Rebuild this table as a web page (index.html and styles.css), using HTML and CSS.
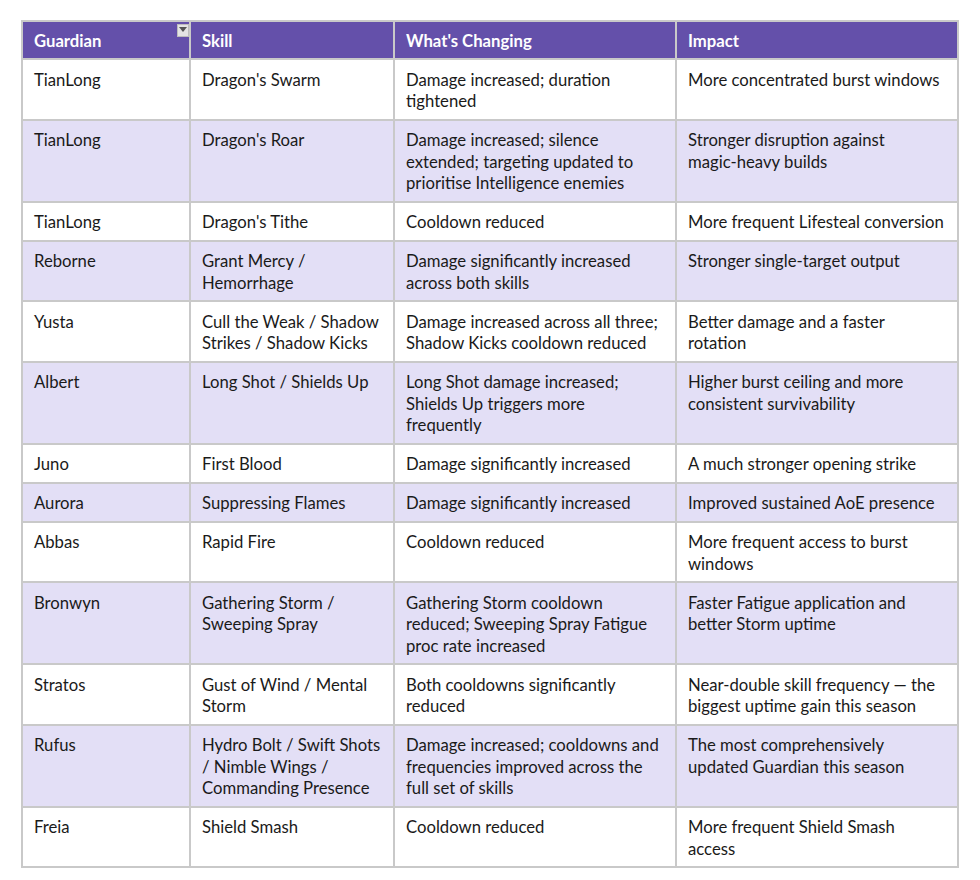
FILE: index.html
```html
<!DOCTYPE html>
<html lang="en">
<head>
<meta charset="utf-8">
<title>Season 6 Guardian changes</title>
<link rel="stylesheet" href="styles.css">
</head>
<body>
<div class="page">
  <table class="changes">
    <colgroup>
      <col class="c-guardian">
      <col class="c-skill">
      <col class="c-change">
      <col class="c-impact">
    </colgroup>
    <thead>
      <tr>
        <th class="has-filter">Guardian<span class="filter" aria-hidden="true"><svg width="8" height="5" viewBox="0 0 8 5"><path d="M0 0h8L4 5z" fill="#555"/></svg></span></th>
        <th>Skill</th>
        <th>What's Changing</th>
        <th>Impact</th>
      </tr>
    </thead>
    <tbody>
      <tr><td>TianLong</td><td>Dragon's Swarm</td><td>Damage increased; duration<br>tightened</td><td>More concentrated burst windows</td></tr>
      <tr><td>TianLong</td><td>Dragon's Roar</td><td>Damage increased; silence<br>extended; targeting updated to<br>prioritise Intelligence enemies</td><td>Stronger disruption against<br>magic-heavy builds</td></tr>
      <tr><td>TianLong</td><td>Dragon's Tithe</td><td>Cooldown reduced</td><td>More frequent Lifesteal conversion</td></tr>
      <tr><td>Reborne</td><td>Grant Mercy /<br>Hemorrhage</td><td>Damage significantly increased<br>across both skills</td><td>Stronger single-target output</td></tr>
      <tr><td>Yusta</td><td>Cull the Weak / Shadow<br>Strikes / Shadow Kicks</td><td>Damage increased across all three;<br>Shadow Kicks cooldown reduced</td><td>Better damage and a faster<br>rotation</td></tr>
      <tr><td>Albert</td><td>Long Shot / Shields Up</td><td>Long Shot damage increased;<br>Shields Up triggers more<br>frequently</td><td>Higher burst ceiling and more<br>consistent survivability</td></tr>
      <tr><td>Juno</td><td>First Blood</td><td>Damage significantly increased</td><td>A much stronger opening strike</td></tr>
      <tr><td>Aurora</td><td>Suppressing Flames</td><td>Damage significantly increased</td><td>Improved sustained AoE presence</td></tr>
      <tr><td>Abbas</td><td>Rapid Fire</td><td>Cooldown reduced</td><td>More frequent access to burst<br>windows</td></tr>
      <tr><td>Bronwyn</td><td>Gathering Storm /<br>Sweeping Spray</td><td>Gathering Storm cooldown<br>reduced; Sweeping Spray Fatigue<br>proc rate increased</td><td>Faster Fatigue application and<br>better Storm uptime</td></tr>
      <tr><td>Stratos</td><td>Gust of Wind / Mental<br>Storm</td><td>Both cooldowns significantly<br>reduced</td><td>Near-double skill frequency — the<br>biggest uptime gain this season</td></tr>
      <tr><td>Rufus</td><td>Hydro Bolt / Swift Shots<br>/ Nimble Wings /<br>Commanding Presence</td><td>Damage increased; cooldowns and<br>frequencies improved across the<br>full set of skills</td><td>The most comprehensively<br>updated Guardian this season</td></tr>
      <tr><td>Freia</td><td>Shield Smash</td><td>Cooldown reduced</td><td>More frequent Shield Smash<br>access</td></tr>
    </tbody>
  </table>
  <p class="caption">Table: Season 6 balance changes by skill, what's changing and the impact on each Guardian</p>
</div>
</body>
</html>
```

FILE: styles.css
```css
html, body {
  margin: 0;
  padding: 0;
  background: #ffffff;
}

.page {
  padding: 20px 0 0 21px;
  font-family: "Lato", "Liberation Sans", sans-serif;
  color: #1a1a1a;
}

.changes {
  border-collapse: collapse;
  table-layout: fixed;
  width: 938px;
  font-size: 16.7px;
  line-height: 21.5px;
}

.c-guardian { width: 168px; }
.c-skill { width: 204px; }
.c-change { width: 282px; }
.c-impact { width: 282px; }

.changes th,
.changes td {
  border: 2px solid #c9c9c9;
  padding: 9.5px 11px 6px 11px;
  text-align: left;
  vertical-align: top;
  white-space: nowrap;
}

.changes th {
  background: #6450aa;
  color: #ffffff;
  font-weight: 700;
  padding-top: 8.5px;
  padding-bottom: 6px;
}

.has-filter {
  position: relative;
}

.filter {
  position: absolute;
  top: 2px;
  right: 0;
  width: 12px;
  height: 13px;
  background: #e4e4e4;
  border: 1px solid #bdbdbd;
  box-sizing: border-box;
  display: flex;
  align-items: center;
  justify-content: center;
}

.filter svg {
  display: block;
  margin-top: -2px;
}

.changes tbody tr:nth-child(even) td {
  background: #e3dff6;
}

.caption {
  margin: 8px 0 0 0;
  font-style: italic;
  font-size: 15px;
  color: #6e6e6e;
}
```
